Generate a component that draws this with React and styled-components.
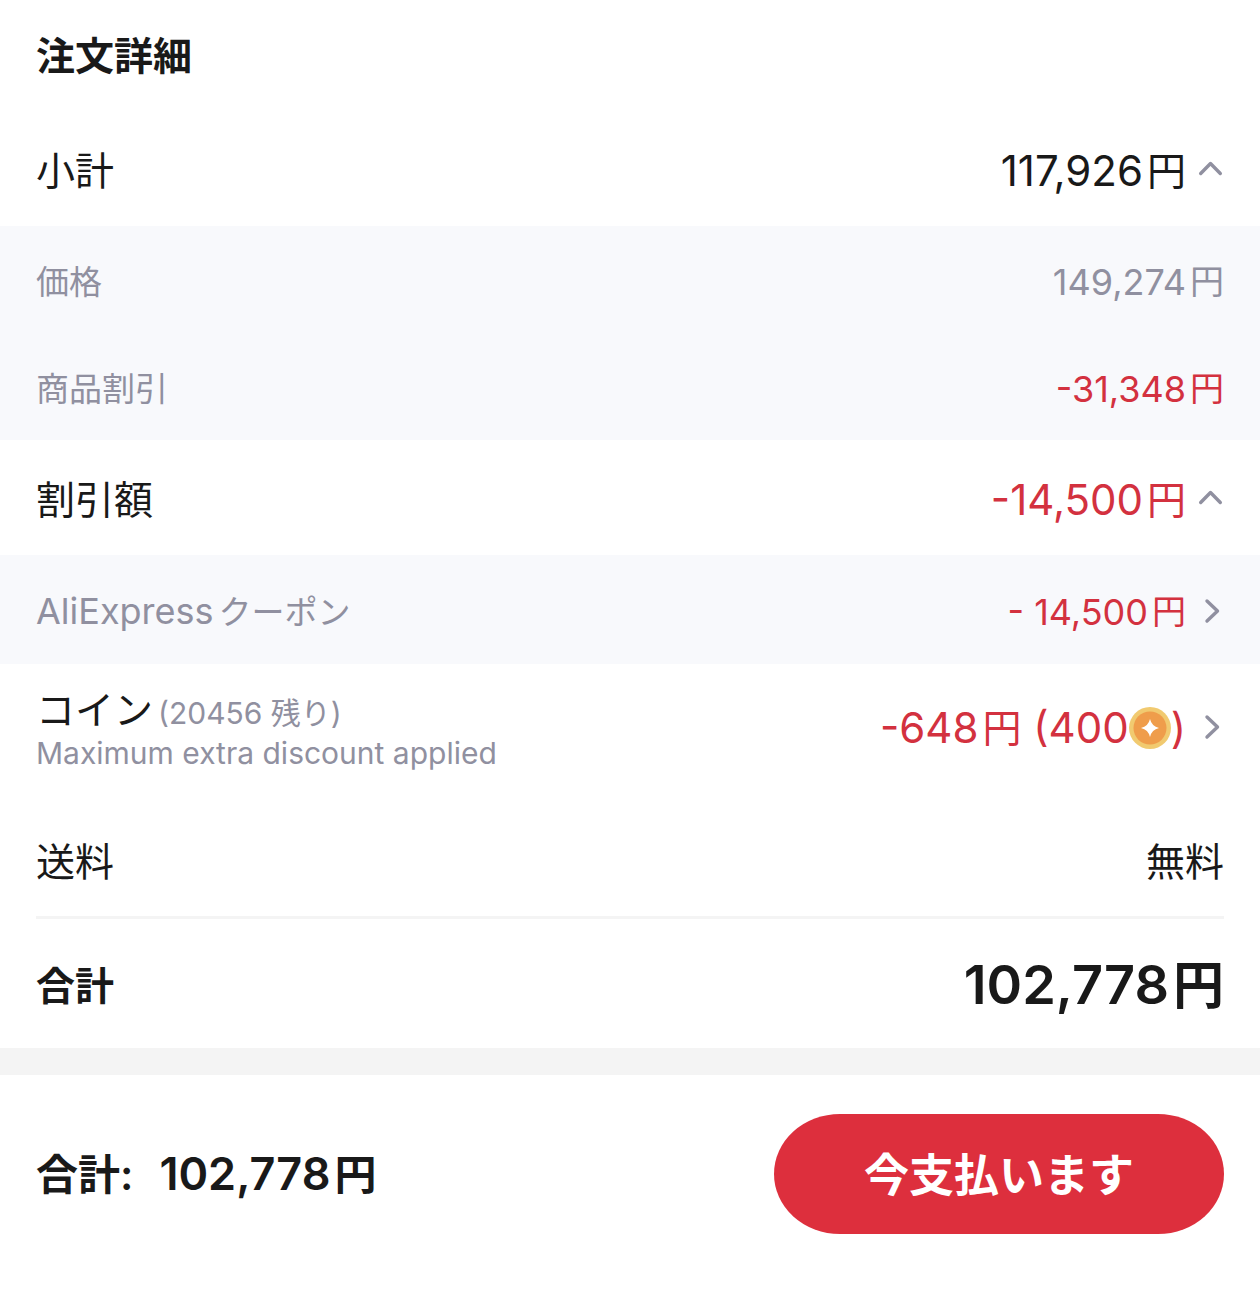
import React, { useState } from "react";
import styled, { createGlobalStyle, css } from "styled-components";

const GlobalStyle = createGlobalStyle`
  * {
    box-sizing: border-box;
  }
  body {
    margin: 0;
    background: #fff;
    color: #191919;
    font-family: Inter, "Noto Sans CJK JP", sans-serif;
  }
`;

const colors = {
  text: "#191919",
  muted: "#9090a0",
  red: "#d3313f",
  panel: "#f8f9fc",
  line: "#f4f4f4",
};

const Page = styled.main`
  width: 100%;
`;

const Title = styled.h1`
  margin: 0;
  padding: 0 36px;
  font-size: 39px;
  font-weight: 700;
  line-height: 112px;
`;

const rowStyle = css`
  display: flex;
  align-items: center;
  justify-content: space-between;
  width: 100%;
  min-height: ${(p) => p.$height || 114}px;
  padding: ${(p) => (p.$top === undefined ? 4 : p.$top)}px 36px 0;
  border: 0;
  background: none;
  color: inherit;
  font: inherit;
  text-align: left;
`;

const Row = styled.div`
  ${rowStyle}
`;

const RowButton = styled.button`
  ${rowStyle}
  cursor: pointer;
`;

const Panel = styled.section`
  background: ${colors.panel};
`;

const Label = styled.span`
  font-size: ${(p) => (p.$small ? 33 : 39)}px;
  font-weight: ${(p) => (p.$bold ? 700 : 400)};
  line-height: 48px;
  color: ${(p) => (p.$small ? colors.muted : colors.text)};
`;

const Latin = styled.span`
  margin-right: 5px;
  font-size: 36px;
`;

const Value = styled.span`
  display: flex;
  align-items: center;
  color: ${(p) => (p.$red ? colors.red : p.$small ? colors.muted : colors.text)};
  font-size: ${(p) => (p.$small ? 36 : 42)}px;
  line-height: 48px;
  white-space: pre;
`;

const Free = styled.span`
  font-size: 39px;
  line-height: 48px;
`;

const Yen = styled.span`
  margin-left: 4px;
  font-size: ${(p) => p.$size || 39}px;
`;

const CoinLabel = styled.span`
  display: flex;
  flex-direction: column;
  padding-top: 3px;
`;

const CoinName = styled.span`
  display: flex;
  align-items: baseline;
  gap: 5px;
`;

const Note = styled.span`
  color: ${colors.muted};
  font-size: 30px;
  line-height: 39px;
`;

const Divider = styled.hr`
  height: 3px;
  margin: 0 36px;
  border: 0;
  background: ${colors.line};
`;

const Total = styled.span`
  font-size: 54px;
  font-weight: 600;
  line-height: 60px;
`;

const Band = styled.div`
  height: 27px;
  background: ${colors.line};
`;

const Footer = styled.footer`
  display: flex;
  align-items: center;
  justify-content: space-between;
  padding: 39px 36px 60px;
`;

const FooterTotal = styled.span`
  display: flex;
  align-items: baseline;
  gap: 26px;
  font-size: 45px;
  font-weight: 600;
  line-height: 60px;
`;

const FooterLabel = styled.span`
  font-size: 42px;
`;

const PayButton = styled.button`
  width: 450px;
  height: 120px;
  padding: 0 0 4px;
  border: 0;
  border-radius: 66px / 60px;
  background: #dd2f3d;
  color: #fff;
  font-family: inherit;
  font-size: 45px;
  font-weight: 600;
  cursor: pointer;
`;

const Icon = styled.svg`
  display: block;
  flex: none;
  margin: 0 0 2px 12px;
`;

function Chevron({ d }) {
  return (
    <Icon width="26" height="26" viewBox="0 0 26 26" fill="none" stroke={colors.muted} strokeWidth="3.4" strokeLinecap="round" strokeLinejoin="round" aria-hidden="true">
      <path d={d} />
    </Icon>
  );
}

const ChevronUp = () => <Chevron d="M2.7 16.5L12.5 6.5L22.3 16.5" />;
const ChevronDown = () => <Chevron d="M2.7 8L12.5 18L22.3 8" />;
const ChevronRight = () => <Chevron d="M9 3L19.5 13L9 23" />;

function Coin() {
  return (
    <svg width="42" height="42" viewBox="0 0 42 42" aria-hidden="true">
      <circle cx="21" cy="21" r="21" fill="#f1ca70" />
      <circle cx="21" cy="21" r="16.5" fill="#ef9d4b" />
      <path d="M21 12Q22.7 19.3 30 21Q22.7 22.7 21 30Q19.3 22.7 12 21Q19.3 19.3 21 12Z" fill="#fff" />
    </svg>
  );
}

function App() {
  const [showPrice, setShowPrice] = useState(true);
  const [showDiscount, setShowDiscount] = useState(true);

  return (
    <Page>
      <GlobalStyle />
      <Title>注文詳細</Title>

      <RowButton type="button" aria-expanded={showPrice} onClick={() => setShowPrice(!showPrice)}>
        <Label>小計</Label>
        <Value>
          117,926<Yen>円</Yen>
          {showPrice ? <ChevronUp /> : <ChevronDown />}
        </Value>
      </RowButton>
      {showPrice && (
        <Panel>
          <Row $height={107}>
            <Label $small>価格</Label>
            <Value $small>
              149,274<Yen $size={34}>円</Yen>
            </Value>
          </Row>
          <Row $height={107}>
            <Label $small>商品割引</Label>
            <Value $small $red>
              -31,348<Yen $size={34}>円</Yen>
            </Value>
          </Row>
        </Panel>
      )}

      <RowButton type="button" $height={115} aria-expanded={showDiscount} onClick={() => setShowDiscount(!showDiscount)}>
        <Label>割引額</Label>
        <Value $red>
          -14,500<Yen>円</Yen>
          {showDiscount ? <ChevronUp /> : <ChevronDown />}
        </Value>
      </RowButton>
      {showDiscount && (
        <Panel>
          <RowButton type="button" $height={109}>
            <Label $small>
              <Latin>AliExpress</Latin>クーポン
            </Label>
            <Value $small $red>
              - 14,500<Yen $size={34}>円</Yen>
              <ChevronRight />
            </Value>
          </RowButton>
        </Panel>
      )}

      <RowButton type="button" $height={128} $top={0}>
        <CoinLabel>
          <CoinName>
            <Label>コイン</Label>
            <Note>(20456 残り)</Note>
          </CoinName>
          <Note>Maximum extra discount applied</Note>
        </CoinLabel>
        <Value $red>
          -648<Yen>円</Yen> (400<Coin />)
          <ChevronRight />
        </Value>
      </RowButton>

      <Row $height={124} $top={16}>
        <Label>送料</Label>
        <Free>無料</Free>
      </Row>
      <Divider />
      <Row $height={129}>
        <Label $bold>合計</Label>
        <Total>
          102,778<Yen $size={51}>円</Yen>
        </Total>
      </Row>
      <Band />

      <Footer>
        <FooterTotal>
          <FooterLabel>合計:</FooterLabel>
          <span>
            102,778<Yen $size={42}>円</Yen>
          </span>
        </FooterTotal>
        <PayButton type="button">今支払います</PayButton>
      </Footer>
    </Page>
  );
}

export default App;
